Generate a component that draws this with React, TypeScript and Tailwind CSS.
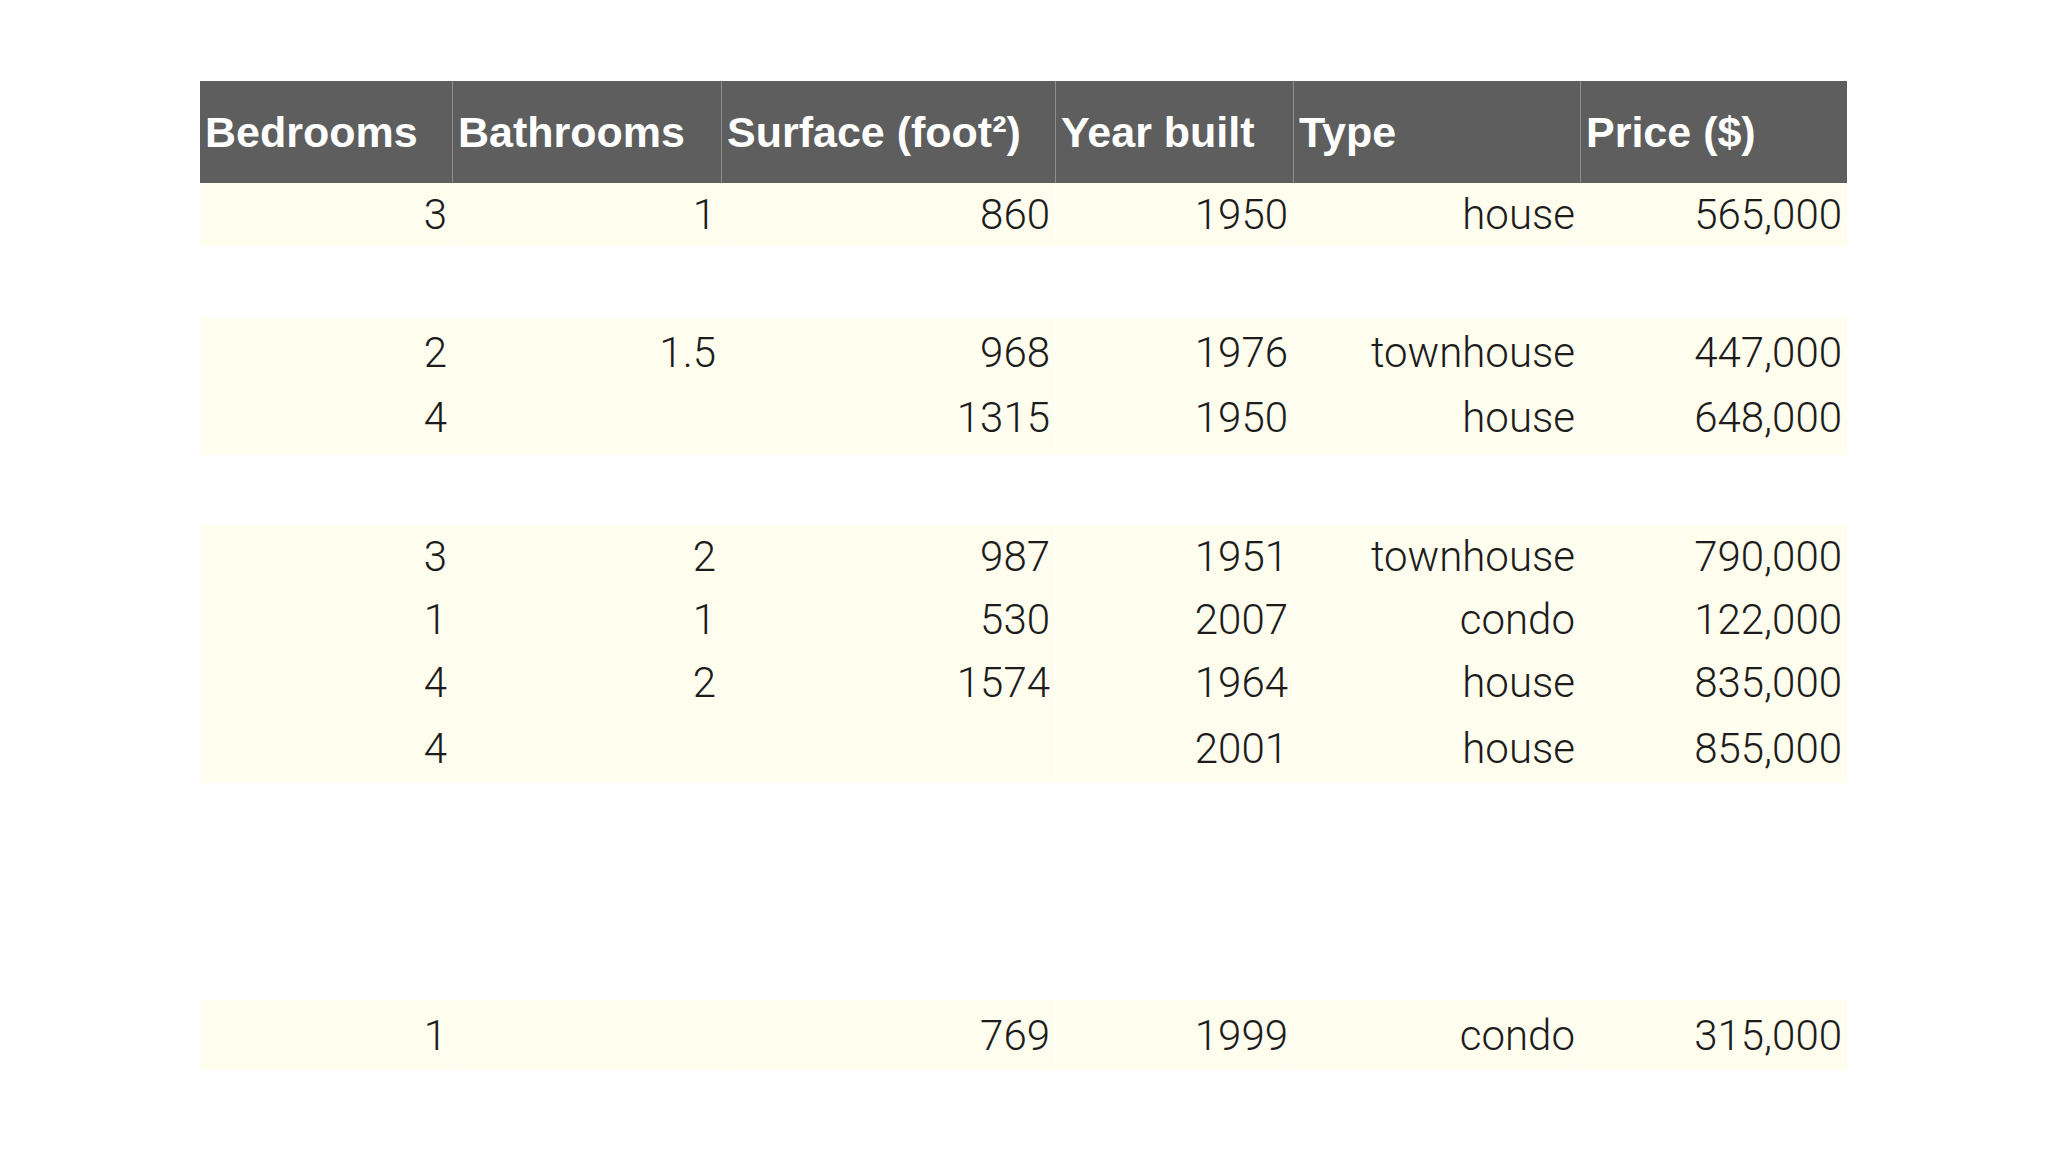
const headers = ["Bedrooms", "Bathrooms", "Surface (foot²)", "Year built", "Type", "Price ($)"];

// cells: null = row is blanked out on the slide; h = row height class
const rows: { h: string; cells: string[] | null }[] = [
  { h: "h-[63px]", cells: ["3", "1", "860", "1950", "house", "565,000"] },
  { h: "h-[72px]", cells: null },
  { h: "h-[68px]", cells: ["2", "1.5", "968", "1976", "townhouse", "447,000"] },
  { h: "h-[69px] pb-[7px]", cells: ["4", "", "1315", "1950", "house", "648,000"] },
  { h: "h-[70px]", cells: null },
  { h: "h-[63px]", cells: ["3", "2", "987", "1951", "townhouse", "790,000"] },
  { h: "h-[62px]", cells: ["1", "1", "530", "2007", "condo", "122,000"] },
  { h: "h-[64px]", cells: ["4", "2", "1574", "1964", "house", "835,000"] },
  { h: "h-[69px]", cells: ["4", "", "", "2001", "house", "855,000"] },
  { h: "h-[72px]", cells: null },
  { h: "h-[72px]", cells: null },
  { h: "h-[73px]", cells: null },
  { h: "h-[70px]", cells: ["1", "", "769", "1999", "condo", "315,000"] },
];

export default function App() {
  return (
    <div className="w-[2048px] h-[1152px] bg-white pt-[81px] pl-[200px] overflow-hidden">
      <div className="grid grid-cols-[252px_269px_334px_238px_287px_267px]">
        {headers.map((h, i) => (
          <div
            key={h}
            className={`h-[102px] bg-[#5e5e5e] flex items-center pl-[5px] text-white font-bold text-[43px] ${
              i > 0 ? "border-l border-[#8e8e8e]" : ""
            }`}
            style={{ fontFamily: '"Liberation Sans", Arial, sans-serif' }}
          >
            {h}
          </div>
        ))}
        {rows.map((r, ri) =>
          headers.map((_, ci) => (
            <div
              key={`${ri}-${ci}`}
              className={`${r.h} flex items-center justify-end pr-[5px] text-[42px] font-light text-[#1c1c1c] ${
                r.cells ? "bg-[#fffdee]" : "bg-white"
              } ${ci > 0 ? "border-l border-[#fffef8]" : ""}`}
              style={{ fontFamily: 'Roboto, "Liberation Sans", sans-serif' }}
            >
              {r.cells ? r.cells[ci] : ""}
            </div>
          ))
        )}
      </div>
    </div>
  );
}
